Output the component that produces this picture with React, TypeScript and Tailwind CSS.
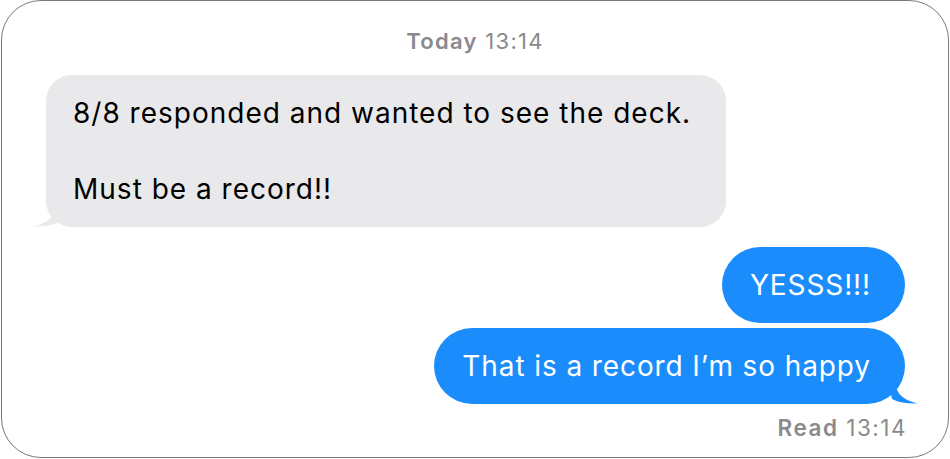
import React from "react";

const font = { fontFamily: "Inter, 'Liberation Sans', sans-serif" };

function LeftTail() {
  return (
    <svg className="absolute left-[-13px] bottom-0" width="30" height="22" viewBox="0 0 30 22">
      <path d="M22 0 C22 10 18 17 0 21.5 C10 22 18 21 26 17 L30 0 Z" fill="#e9e9eb" />
    </svg>
  );
}

function RightTail() {
  return (
    <svg className="absolute right-[-13px] bottom-0" width="30" height="22" viewBox="0 0 30 22">
      <path d="M8 0 C8 10 12 17 30 21.5 C20 22 12 21 4 17 L0 0 Z" fill="#1a8cfc" />
    </svg>
  );
}

export default function App() {
  return (
    <div className="w-[950px] h-[459px] bg-white" style={font}>
      <div className="w-[948px] h-[458px] ml-px border border-[#7a7a7a] rounded-[40px] flex flex-col px-[44px] pt-[25px]">
        <div className="text-center text-[22px] leading-[30px] tracking-[1.3px] text-[#8a8a8e]">
          <span className="font-semibold">Today</span> 13:14
        </div>
        <div className="mt-[19px] self-start relative">
          <div className="relative z-10 bg-[#e9e9eb] rounded-[26px] pl-[27px] pr-[35px] pt-[19px] pb-[19px] text-[28px] leading-[38px] text-black tracking-[1px]">
            <div>8/8 responded and wanted to see the deck.</div>
            <div className="h-[38px]" />
            <div>Must be a record!!</div>
          </div>
          <LeftTail />
        </div>
        <div className="mt-[20px] self-end flex flex-col items-end gap-[5px] mr-[-1px]">
          <div className="bg-[#1a8cfc] rounded-[38px] pl-[28px] pr-[34px] h-[76px] flex items-center text-[28px] text-white tracking-[0.9px]">
            YESSS!!!
          </div>
          <div className="relative">
            <div className="relative z-10 bg-[#1a8cfc] rounded-[38px] pl-[28px] pr-[34px] h-[76px] flex items-center text-[28px] text-white tracking-[0.9px]">
              That is a record I’m so happy
            </div>
            <RightTail />
          </div>
          <div className="mt-[4px] mr-[-2px] text-[22.5px] leading-[30px] tracking-[1.5px] text-[#8a8a8e]">
            <span className="font-semibold">Read</span> 13:14
          </div>
        </div>
      </div>
    </div>
  );
}
